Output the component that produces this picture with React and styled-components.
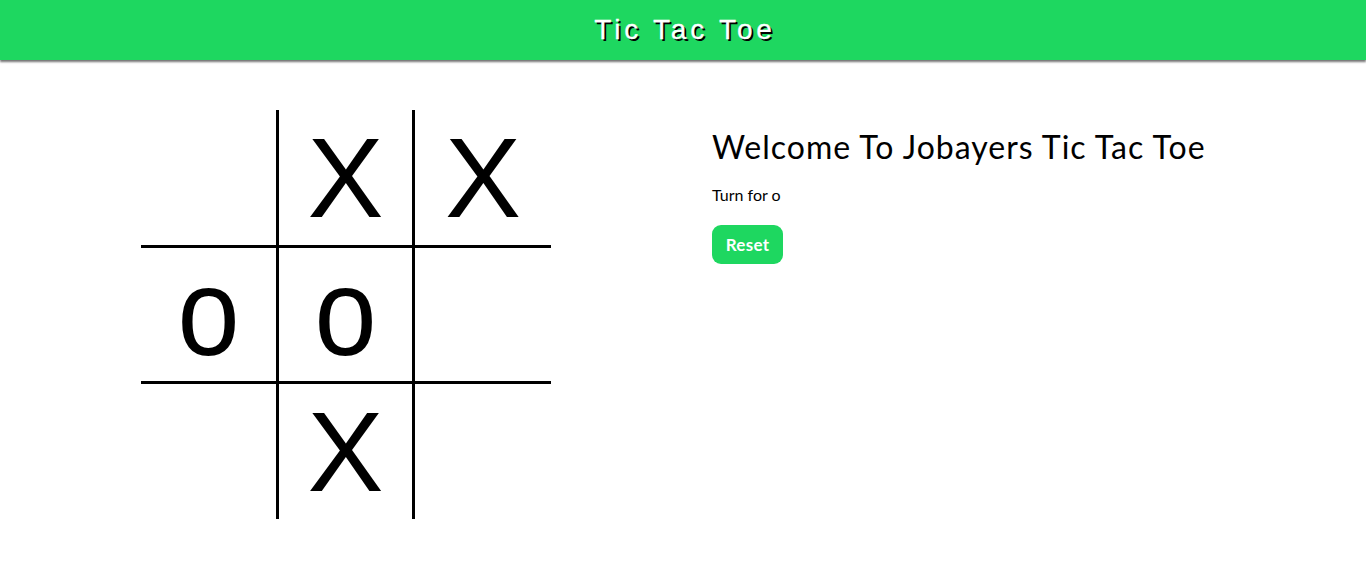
import React from "react";
import styled, { createGlobalStyle } from "styled-components";

const GlobalStyle = createGlobalStyle`
  html, body { margin: 0; padding: 0; background: #fff; }
  body { font-family: Lato, "Noto Sans", sans-serif; color: #000; }
  * { box-sizing: border-box; }
`;

const Header = styled.header`
  height: 60px;
  background: #1ed760;
  box-shadow: 0 2px 2px rgba(0, 0, 0, 0.55);
  display: flex;
  align-items: center;
  justify-content: center;
`;

const Title = styled.h1`
  margin: 0;
  padding-left: 4px;
  font-family: "Liberation Sans", Arial, sans-serif;
  font-size: 28px;
  font-weight: 400;
  letter-spacing: 3.8px;
  color: #fff;
  text-shadow: 2px 2px 0 #000;
  -webkit-text-stroke: 0.3px #fff;
`;

const Main = styled.main`
  display: flex;
  align-items: flex-start;
  gap: 161px;
  padding: 50px 0 0 141px;
`;

const Board = styled.div`
  display: grid;
  grid-template-columns: 138px 136px 136px;
  grid-template-rows: 138px 136px 135px;
`;

const Cell = styled.div`
  display: flex;
  align-items: center;
  justify-content: center;
  border-right: ${(p) => (p.$col < 2 ? "3px solid #000" : "none")};
  border-bottom: ${(p) => (p.$row < 2 ? "3px solid #000" : "none")};
  font-family: "Liberation Sans", Arial, sans-serif;
  line-height: 1;
  overflow: visible;
`;

const Mark = styled.span`
  display: inline-block;
  font-size: ${(p) => (p.$value === "X" ? "114px" : "124px")};
  line-height: ${(p) => (p.$value === "X" ? "1" : "normal")};
  transform: ${(p) => (p.$value === "X" ? "none" : "translateY(-3px) scaleX(0.9)")};
`;

const Info = styled.section`
  display: flex;
  flex-direction: column;
  align-items: flex-start;
  padding-top: 18px;
`;

const Heading = styled.h2`
  margin: 0;
  font-size: 32px;
  font-weight: 400;
  letter-spacing: 1px;
  line-height: 38px;
`;

const Turn = styled.p`
  margin: 19px 0 0;
  font-size: 16px;
  line-height: 20px;
`;

const ResetButton = styled.button`
  margin-top: 20px;
  width: 71px;
  height: 39px;
  border: none;
  border-radius: 9px;
  background: #1ed760;
  color: #fff;
  font-family: Lato, "Noto Sans", sans-serif;
  font-size: 17px;
  font-weight: 700;
  letter-spacing: 0.3px;
  cursor: pointer;
`;

const cells = ["", "X", "X", "o", "o", "", "", "X", ""];

export default function App() {
  return (
    <>
      <GlobalStyle />
      <Header>
        <Title>Tic Tac Toe</Title>
      </Header>
      <Main>
        <Board>
          {cells.map((v, i) => (
            <Cell key={i} $row={Math.floor(i / 3)} $col={i % 3}>
              {v && <Mark $value={v}>{v}</Mark>}
            </Cell>
          ))}
        </Board>
        <Info>
          <Heading>Welcome To Jobayers Tic Tac Toe</Heading>
          <Turn>Turn for o</Turn>
          <ResetButton>Reset</ResetButton>
        </Info>
      </Main>
    </>
  );
}
